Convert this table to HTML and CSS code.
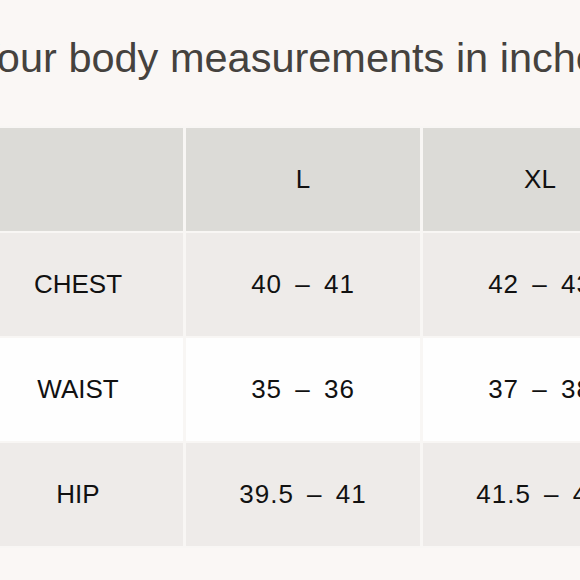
FILE: index.html
```html
<!DOCTYPE html>
<html lang="en">
<head>
<meta charset="utf-8">
<title>Size chart</title>
<link rel="stylesheet" href="styles.css">
</head>
<body>
<div class="page">
  <h2 class="title">Your body measurements in inches</h2>
  <table class="chart">
    <thead>
      <tr class="head">
        <th class="label"></th>
        <th>L</th>
        <th>XL</th>
      </tr>
    </thead>
    <tbody>
      <tr class="shade">
        <td class="label">CHEST</td>
        <td class="num">40 – 41</td>
        <td class="num">42 – 43</td>
      </tr>
      <tr class="plain">
        <td class="label">WAIST</td>
        <td class="num">35 – 36</td>
        <td class="num">37 – 38</td>
      </tr>
      <tr class="shade">
        <td class="label">HIP</td>
        <td class="num">39.5 – 41</td>
        <td class="num">41.5 – 43</td>
      </tr>
    </tbody>
  </table>
</div>
</body>
</html>
```

FILE: styles.css
```css
html, body {
  margin: 0;
  padding: 0;
  background: #faf7f5;
  overflow: hidden;
}

.page {
  margin-left: -27px;
  width: 700px;
}

.title {
  margin: 0;
  padding-top: 35px;
  height: 128px;
  box-sizing: border-box;
  font-family: "Liberation Sans", Arial, sans-serif;
  font-weight: 400;
  font-size: 41.5px;
  line-height: 46px;
  color: #45423e;
  white-space: nowrap;
}

.chart {
  border-collapse: separate;
  border-spacing: 3px 2px;
  margin: -2px 0 0 -3px;
  background: #f8f6f4;
  font-family: "Liberation Sans", Arial, sans-serif;
  font-size: 26px;
  color: #111111;
}

.chart th,
.chart td {
  height: 103px;
  width: 234px;
  padding: 0;
  text-align: center;
  vertical-align: middle;
  font-weight: 400;
}

.chart .label {
  width: 210px;
}

.head th {
  background: #dcdbd7;
}

.shade td {
  background: #eeebe9;
}

.plain td {
  background: #fefefe;
}

.num {
  letter-spacing: 1px;
  word-spacing: 5px;
}

.dash {
  display: inline-block;
  transform: scaleX(1.2);
}
```
